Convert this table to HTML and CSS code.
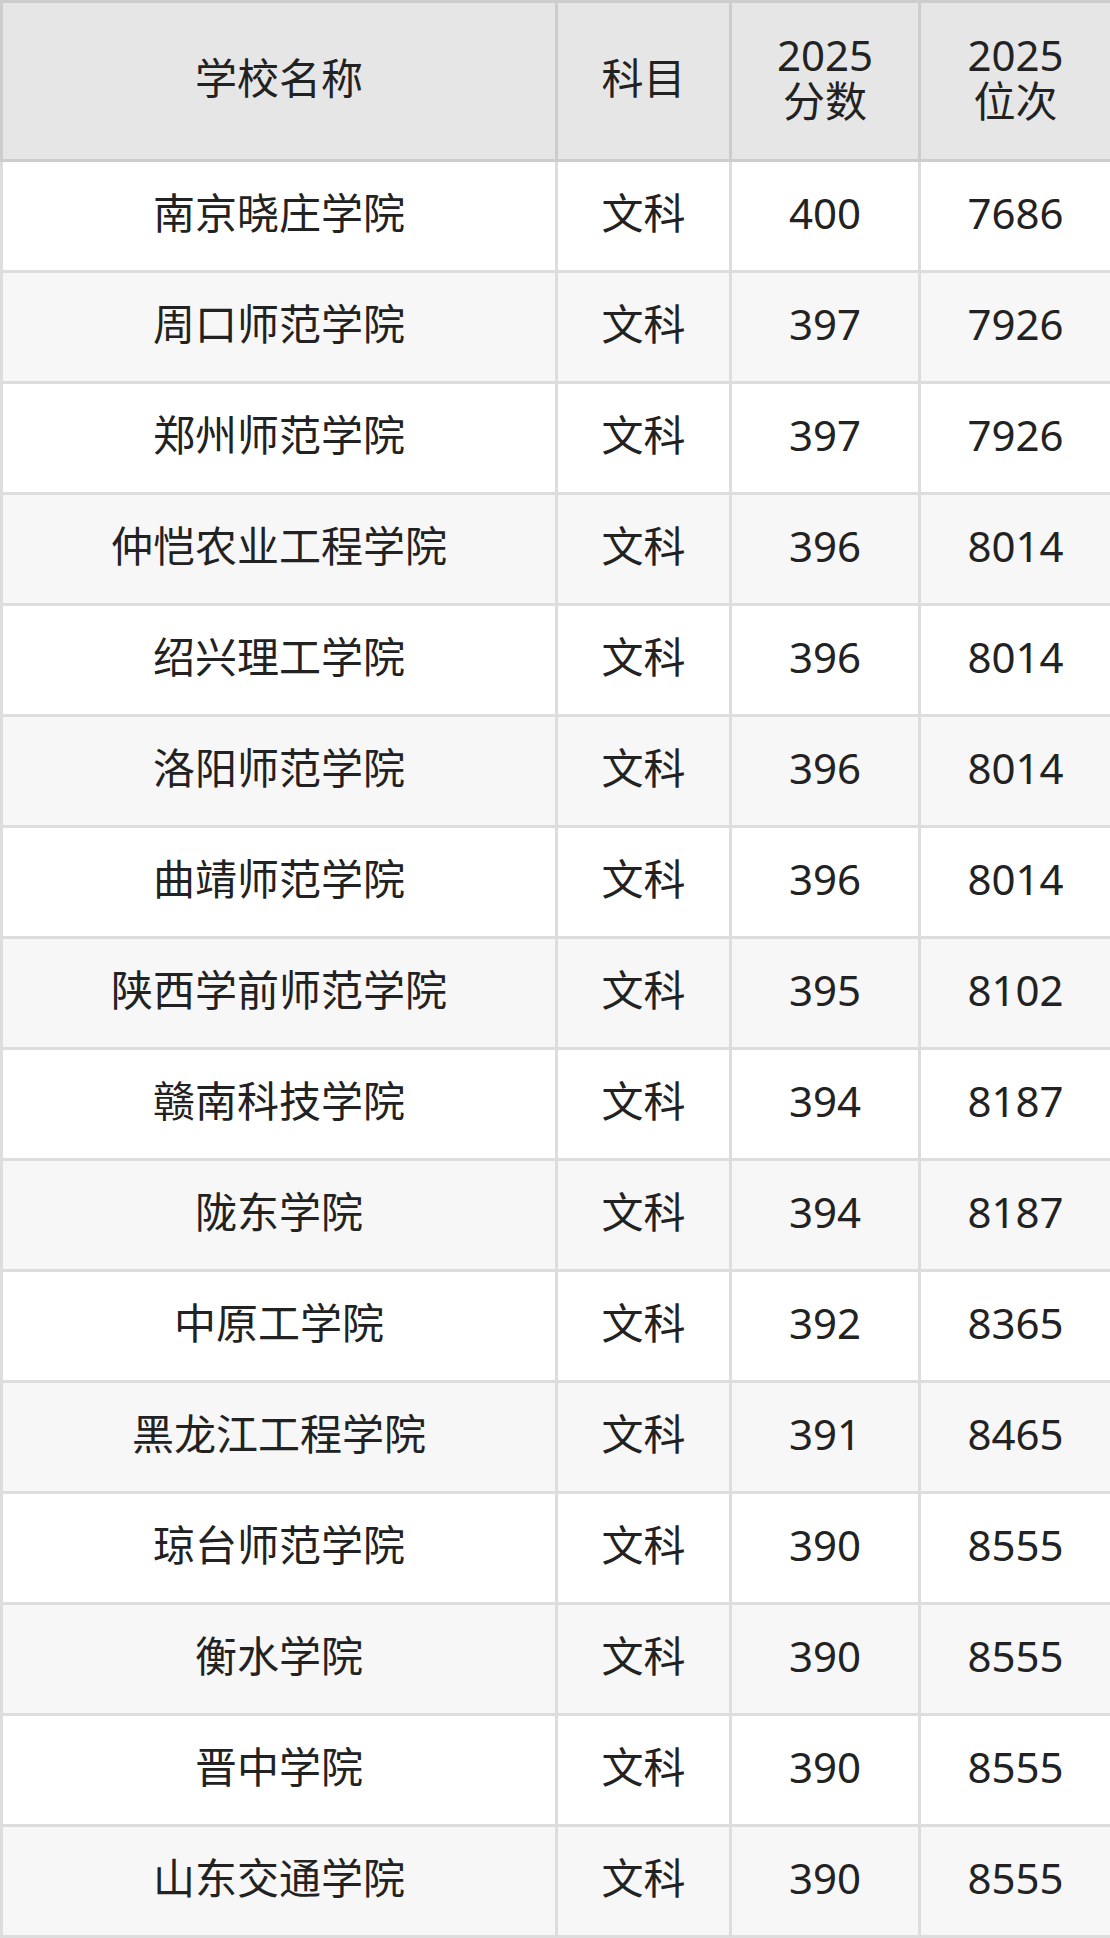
FILE: index.html
```html
<!DOCTYPE html>
<html lang="zh-CN">
<head>
<meta charset="utf-8">
<title>2025 分数位次</title>
<link rel="stylesheet" href="styles.css">
</head>
<body>
<table class="score-table">
  <colgroup>
    <col class="c-name">
    <col class="c-subject">
    <col class="c-score">
    <col class="c-rank">
  </colgroup>
  <thead>
    <tr>
      <th>学校名称</th>
      <th>科目</th>
      <th><span class="hl">2025</span><span class="hl">分数</span></th>
      <th><span class="hl">2025</span><span class="hl">位次</span></th>
    </tr>
  </thead>
  <tbody>
    <tr><td>南京晓庄学院</td><td>文科</td><td>400</td><td>7686</td></tr>
    <tr><td>周口师范学院</td><td>文科</td><td>397</td><td>7926</td></tr>
    <tr><td>郑州师范学院</td><td>文科</td><td>397</td><td>7926</td></tr>
    <tr><td>仲恺农业工程学院</td><td>文科</td><td>396</td><td>8014</td></tr>
    <tr><td>绍兴理工学院</td><td>文科</td><td>396</td><td>8014</td></tr>
    <tr><td>洛阳师范学院</td><td>文科</td><td>396</td><td>8014</td></tr>
    <tr><td>曲靖师范学院</td><td>文科</td><td>396</td><td>8014</td></tr>
    <tr><td>陕西学前师范学院</td><td>文科</td><td>395</td><td>8102</td></tr>
    <tr><td>赣南科技学院</td><td>文科</td><td>394</td><td>8187</td></tr>
    <tr><td>陇东学院</td><td>文科</td><td>394</td><td>8187</td></tr>
    <tr><td>中原工学院</td><td>文科</td><td>392</td><td>8365</td></tr>
    <tr><td>黑龙江工程学院</td><td>文科</td><td>391</td><td>8465</td></tr>
    <tr><td>琼台师范学院</td><td>文科</td><td>390</td><td>8555</td></tr>
    <tr><td>衡水学院</td><td>文科</td><td>390</td><td>8555</td></tr>
    <tr><td>晋中学院</td><td>文科</td><td>390</td><td>8555</td></tr>
    <tr><td>山东交通学院</td><td>文科</td><td>390</td><td>8555</td></tr>
  </tbody>
</table>
</body>
</html>
```
FILE: styles.css
```css
html, body {
  margin: 0;
  padding: 0;
  background: #ffffff;
}

.score-table {
  width: 1110px;
  border-collapse: collapse;
  table-layout: fixed;
  font-family: "Noto Sans", "Noto Sans CJK SC", sans-serif;
  font-size: 42px;
  color: #222222;
}

.c-name { width: 555px; }
.c-subject { width: 174px; }
.c-score { width: 189px; }
.c-rank { width: 192px; }

.score-table th,
.score-table td {
  text-align: center;
  vertical-align: middle;
  padding: 0 0 7px 0;
}

.score-table th {
  height: 149px;
  background: #e6e6e6;
  border: 3px solid #cdcdcd;
  font-weight: normal;
  line-height: 48px;
}

.hl {
  display: block;
  height: 46px;
  line-height: 46px;
}

.score-table td {
  height: 101px;
  border: 3px solid #dddddd;
  line-height: 48px;
}

.score-table tbody tr:nth-child(odd) td {
  background: #ffffff;
}

.score-table tbody tr:nth-child(even) td {
  background: #f7f7f7;
}
```
